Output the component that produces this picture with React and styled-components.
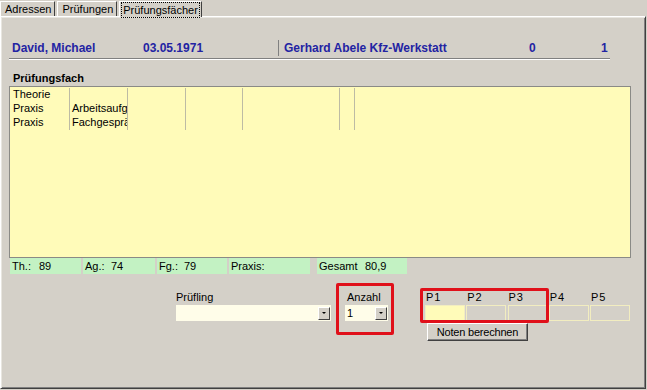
import React from 'react'
import styled, { createGlobalStyle } from 'styled-components'

const Global = createGlobalStyle`
  html, body {
    margin: 0;
    padding: 0;
    background: #d4d0c8;
  }
  body {
    font-family: "Liberation Sans", Arial, sans-serif;
    font-size: 11px;
    color: #000;
  }
`;

const Window = styled.div`
  width: 647px;
  height: 390px;
  background: #d4d0c8;
  display: flex;
  flex-direction: column;
  overflow: hidden;
`;

const TabBar = styled.div`
  display: flex;
  align-items: flex-end;
  height: 16px;
  gap: 2px;
`;

const Tab = styled.div`
  height: ${p => (p.$active ? '16px' : '15px')};
  padding: 0 ${p => (p.$active ? '2px' : '3px')} 0 ${p => (p.$active ? '2px' : '4px')};
  box-sizing: border-box;
  border-top: 1px solid #fff;
  border-left: 1px solid #fff;
  border-right: 1px solid #404040;
  font-size: 11px;
  line-height: 14px;
  display: flex;
  align-items: center;
  margin-bottom: ${p => (p.$active ? '-1px' : '0')};
  background: #d4d0c8;
  position: relative;
  z-index: ${p => (p.$active ? 2 : 1)};

  span {
    padding: 0 1px;
    outline: ${p => (p.$active ? '1px dotted #000' : 'none')};
    outline-offset: 0;
  }
`;

const Panel = styled.div`
  flex: 1;
  margin-right: 1px;
  margin-bottom: 1px;
  box-sizing: border-box;
  border-top: 1px solid #fff;
  border-left: 1px solid #fff;
  border-right: 1px solid #404040;
  border-bottom: 1px solid #404040;
  box-shadow: inset 1px 1px 0 #e8e6e0, inset -1px -1px 0 #808080;
  padding: 21px 0 0 8px;
  display: flex;
  flex-direction: column;
`;

const HeaderRow = styled.div`
  width: 601px;
  height: 20px;
  display: flex;
  align-items: center;
  border-bottom: 1px solid #808080;
  box-shadow: 0 1px 0 #fff;
  color: #2323a3;
  font-weight: bold;
  font-size: 12px;
`;

const HeaderCell = styled.div`
  width: ${p => p.$w}px;
  padding-left: ${p => p.$pl || 0}px;
  box-sizing: border-box;
  white-space: nowrap;
  height: 16px;
  line-height: 16px;
  border-left: ${p => (p.$sep ? '1px solid #808080' : 'none')};
`;

const SectionTitle = styled.div`
  font-weight: bold;
  font-size: 11px;
  margin: 12px 0 0 4px;
  height: 15px;
  line-height: 15px;
`;

const GridBox = styled.div`
  width: 622px;
  height: 172px;
  box-sizing: border-box;
  background: #fffbb9;
  border: 1px solid #8a8a86;
  padding: 1px 0 0 1px;
`;

const GridRow = styled.div`
  display: flex;
  height: 14px;
  line-height: 13px;
`;

const GridCell = styled.div`
  width: ${p => p.$w}px;
  box-sizing: border-box;
  padding-left: 2px;
  white-space: nowrap;
  overflow: hidden;
  border-right: 1px solid #bdbba4;
`;

const SumRow = styled.div`
  display: flex;
  height: 16px;
  margin-left: 1px;
`;

const SumCell = styled.div`
  width: ${p => p.$w}px;
  margin-left: ${p => p.$ml || 0}px;
  background: #c3f2c3;
  display: flex;
  align-items: center;
  padding-left: 2px;
  box-sizing: border-box;
  white-space: nowrap;
`;

const SumLabel = styled.span`
  display: inline-block;
  width: ${p => p.$w}px;
`;

const BottomRow = styled.div`
  display: flex;
  align-items: flex-start;
  margin-top: 9px;
  padding-left: 167px;
`;

const FieldGroup = styled.div`
  display: flex;
  flex-direction: column;
  margin-top: 8px;
`;

const Label = styled.div`
  height: 13px;
  line-height: 13px;
  margin-bottom: 1px;
  padding-left: ${p => p.$pl || 0}px;
`;

const Combo = styled.div`
  width: ${p => p.$w}px;
  height: 16px;
  background: #fffde9;
  display: flex;
  align-items: center;
  justify-content: space-between;
  box-sizing: border-box;
  padding: 0 1px 0 2px;
`;

const DropButton = styled.div`
  width: 12px;
  height: 13px;
  background: #d4d0c8;
  box-sizing: border-box;
  border-top: 1px solid #fff;
  border-left: 1px solid #fff;
  border-right: 1px solid #404040;
  border-bottom: 1px solid #404040;
  display: flex;
  align-items: center;
  justify-content: center;

  &::after {
    content: '';
    border-left: 2px solid transparent;
    border-right: 2px solid transparent;
    border-top: 2px solid #000;
  }
`;

const HighlightBox = styled.div`
  margin-left: 5px;
  border: 3px solid #e0101a;
  border-radius: 2px;
  padding: 5px 3px 11px 6px;
  display: flex;
  flex-direction: column;
`;

const Scores = styled.div`
  position: relative;
  margin-left: 31px;
  margin-top: 8px;
`;

const ScoreGrid = styled.div`
  display: grid;
  grid-template-columns: repeat(5, 40px);
  column-gap: 1.25px;
`;

const ScoreLabel = styled.div`
  height: 13px;
  line-height: 13px;
  padding-left: 1px;
  margin-bottom: 1px;
  letter-spacing: 1px;
`;

const ScoreInput = styled.div`
  height: 16px;
  box-sizing: border-box;
  border: 1px solid #f2edc0;
  background: ${p => (p.$active ? '#fffbb9' : '#d4d0c8')};
`;

const Marker = styled.div`
  position: absolute;
  left: -5px;
  top: -3px;
  width: 129px;
  height: 35px;
  box-sizing: border-box;
  border: 3px solid #e0101a;
  border-radius: 2px;
  pointer-events: none;
`;

const Button = styled.div`
  width: 101px;
  height: 18px;
  margin: 2px 0 0 2px;
  box-sizing: border-box;
  border-top: 1px solid #fff;
  border-left: 1px solid #fff;
  border-right: 1px solid #404040;
  border-bottom: 1px solid #404040;
  box-shadow: inset -1px -1px 0 #808080;
  display: flex;
  align-items: center;
  justify-content: center;
  font-size: 11px;
  letter-spacing: -0.2px;
`;

const cols = [59, 58, 58, 57, 97, 15];
const rows = [
  ['Theorie', '', '', '', '', ''],
  ['Praxis', 'Arbeitsaufgabe', '', '', '', ''],
  ['Praxis', 'Fachgespräch', '', '', '', ''],
];

export default function App() {
  return (
    <Window>
      <Global />
      <TabBar>
        <Tab>Adressen</Tab>
        <Tab>Prüfungen</Tab>
        <Tab $active><span>Prüfungsfächer</span></Tab>
      </TabBar>
      <Panel>
        <HeaderRow>
          <HeaderCell $w={134} $pl={3}>David, Michael</HeaderCell>
          <HeaderCell $w={135}>03.05.1971</HeaderCell>
          <HeaderCell $w={251} $pl={5} $sep>Gerhard Abele Kfz-Werkstatt</HeaderCell>
          <HeaderCell $w={72}>0</HeaderCell>
          <HeaderCell $w={9}>1</HeaderCell>
        </HeaderRow>

        <SectionTitle>Prüfungsfach</SectionTitle>
        <GridBox>
          {rows.map((r, i) => (
            <GridRow key={i}>
              {r.map((c, j) => (
                <GridCell key={j} $w={cols[j]}>{c}</GridCell>
              ))}
            </GridRow>
          ))}
        </GridBox>

        <SumRow>
          <SumCell $w={71}><SumLabel $w={27}>Th.:</SumLabel>89</SumCell>
          <SumCell $w={72} $ml={2}><SumLabel $w={26}>Ag.:</SumLabel>74</SumCell>
          <SumCell $w={70} $ml={2}><SumLabel $w={25}>Fg.:</SumLabel>79</SumCell>
          <SumCell $w={81} $ml={2}>Praxis:</SumCell>
          <SumCell $w={90} $ml={7}><SumLabel $w={46}>Gesamt</SumLabel>80,9</SumCell>
        </SumRow>

        <BottomRow>
          <FieldGroup>
            <Label>Prüfling</Label>
            <Combo $w={155}><span /><DropButton /></Combo>
          </FieldGroup>
          <HighlightBox>
            <Label $pl={2}>Anzahl</Label>
            <Combo $w={43}><span>1</span><DropButton /></Combo>
          </HighlightBox>
          <Scores>
            <ScoreGrid>
              {['P1', 'P2', 'P3', 'P4', 'P5'].map(p => (
                <ScoreLabel key={p}>{p}</ScoreLabel>
              ))}
              {[0, 1, 2, 3, 4].map(i => (
                <ScoreInput key={i} $active={i === 0} />
              ))}
            </ScoreGrid>
            <Button>Noten berechnen</Button>
            <Marker />
          </Scores>
        </BottomRow>
      </Panel>
    </Window>
  )
}
